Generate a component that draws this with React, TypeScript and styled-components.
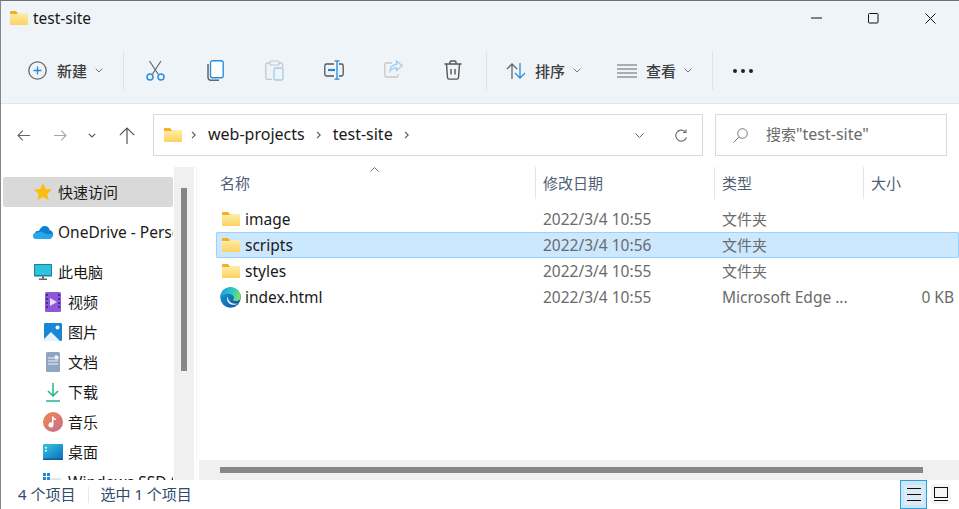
import React from 'react';
import styled, { createGlobalStyle } from 'styled-components';

const GlobalStyle = createGlobalStyle`
  html, body {
    margin: 0;
    padding: 0;
    width: 959px;
    height: 509px;
    overflow: hidden;
    background: #fff;
  }
`;

const FONT = `"Noto Sans", "Noto Sans CJK SC", sans-serif`;

const Window = styled.div`
  width: 959px;
  height: 509px;
  box-sizing: border-box;
  border-top: 1px solid #6f6f6f;
  border-left: 1px solid #7f8790;
  display: flex;
  flex-direction: column;
  font-family: ${FONT};
  font-size: 15px;
  color: #1a1a1a;
  background: #fff;
  overflow: hidden;
`;

const TitleBar = styled.div`
  height: 36px;
  flex: none;
  box-sizing: border-box;
  padding: 0 0 2px 9px;
  display: flex;
  align-items: center;
  background: #eff4f9;
`;

const TitleText = styled.span`
  margin-left: 5px;
  font-size: 15.5px;
`;

const WindowButtons = styled.div`
  margin-left: auto;
  display: flex;
  align-items: center;
`;

const WindowButton = styled.div`
  width: 57px;
  display: flex;
  justify-content: center;
  svg {
    display: block;
  }
`;

const Toolbar = styled.div`
  height: 65px;
  padding-top: 1px;
  flex: none;
  display: flex;
  align-items: center;
  background: #eff4f9;
  border-bottom: 1px solid #e3e5e8;
`;

const NewButton = styled.div`
  width: 122px;
  display: flex;
  align-items: center;
  padding-left: 27px;
  box-sizing: border-box;
`;

const Divider = styled.div`
  width: 1px;
  height: 39px;
  background: #dfe3e7;
  flex: none;
`;

const IconButton = styled.div`
  width: 59.5px;
  display: flex;
  justify-content: center;
  svg {
    display: block;
  }
`;

const ToolButtons = styled.div`
  display: flex;
  padding-left: 2px;
  width: 362px;
  box-sizing: border-box;
`;

const ToolLabel = styled.span<{ $gap: number }>`
  font-size: 15px;
  color: #3d3d3d;
  font-weight: 500;
  margin-left: ${(p) => p.$gap}px;
`;

const Chevron = styled.svg`
  margin-left: 8px;
  display: block;
`;

const SortGroup = styled.div`
  width: 111px;
  display: flex;
  align-items: center;
  padding-left: 19px;
`;

const ViewGroup = styled.div`
  width: 95px;
  display: flex;
  align-items: center;
`;

const Dots = styled.div`
  margin-left: 20px;
  display: flex;
  gap: 4px;
  span {
    width: 4px;
    height: 4px;
    border-radius: 50%;
    background: #222;
  }
`;

const AddressRow = styled.div`
  height: 63px;
  flex: none;
  box-sizing: border-box;
  padding-bottom: 1px;
  display: flex;
  align-items: center;
`;

const NavButtons = styled.div`
  width: 152px;
  display: flex;
  align-items: center;
  padding-left: 16px;
  box-sizing: border-box;
`;

const NavSlot = styled.span<{ $gap?: number }>`
  display: block;
  margin-left: ${(p) => p.$gap ?? 0}px;
  svg {
    display: block;
  }
`;

const AddressBox = styled.div`
  width: 550px;
  height: 42px;
  box-sizing: border-box;
  border: 1px solid #d9d9d9;
  display: flex;
  align-items: center;
  padding: 0 14px 0 10px;
  flex: none;
`;

const FolderArrowGap = styled.span`
  width: 9px;
`;

const Crumb = styled.span`
  font-size: 16px;
  margin: -2px 11px 0 12px;
`;

const AddressActions = styled.div`
  margin-left: auto;
  display: flex;
  align-items: center;
  gap: 31px;
  svg {
    display: block;
  }
`;

const SearchBox = styled.div`
  width: 232px;
  height: 42px;
  box-sizing: border-box;
  border: 1px solid #d9d9d9;
  margin-left: 12px;
  display: flex;
  align-items: center;
  padding-left: 17px;
  color: #6b6b6b;
  flex: none;
`;

const SearchText = styled.span`
  margin: -2px 0 0 18px;
`;

const LatinPart = styled.span`
  font-size: 16px;
`;

const Main = styled.div`
  flex: 1;
  min-height: 0;
  display: flex;
  overflow: hidden;
`;

const Sidebar = styled.div`
  width: 173px;
  flex: none;
  overflow: hidden;
  padding: 10px 0 0 2px;
  box-sizing: border-box;
`;

const NavItem = styled.div<{ $depth?: number; $active?: boolean; $spaced?: boolean }>`
  height: 30px;
  width: 170px;
  flex: none;
  display: flex;
  align-items: center;
  box-sizing: border-box;
  white-space: nowrap;
  overflow: hidden;
  border-radius: 2px;
  padding-left: ${(p) => (p.$depth ? 40 : 30)}px;
  background: ${(p) => (p.$active ? '#d9d9d9' : 'transparent')};
  margin-bottom: ${(p) => (p.$spaced ? 10 : 0)}px;
`;

const NavLabel = styled.span<{ $latin?: boolean }>`
  margin-top: ${(p) => (p.$latin ? 0 : -2)}px;
  font-size: ${(p) => (p.$latin ? 15.5 : 15)}px;
`;

const NavIcon = styled.span<{ $inset?: number }>`
  width: 25px;
  flex: none;
  display: flex;
  align-items: center;
  padding-left: ${(p) => p.$inset ?? 0}px;
  box-sizing: border-box;
  svg {
    display: block;
  }
`;

const VScroll = styled.div`
  width: 20px;
  flex: none;
  background: #f0f0f0;
  padding: 21px 7px 0;
  box-sizing: border-box;
`;

const VThumb = styled.div`
  width: 6px;
  height: 183px;
  background: #878787;
`;

const Content = styled.div`
  flex: 1;
  min-width: 0;
  display: flex;
  flex-direction: column;
  margin-left: 2px;
  padding-left: 2px;
  border-left: 1px solid #f5f5f5;
`;

const ListArea = styled.div`
  flex: 1;
  min-height: 0;
`;

const HeaderRow = styled.div`
  height: 32px;
  display: grid;
  grid-template-columns: 337px 179px 149px 1fr;
  position: relative;
  color: #4f5f73;
  margin-bottom: 7px;
`;

const HeaderCell = styled.div<{ $first?: boolean }>`
  display: flex;
  align-items: center;
  padding-left: ${(p) => (p.$first ? 21 : 7)}px;
  padding-bottom: 2px;
  border-right: 1px solid #e5e5e5;
  &:last-child {
    border-right: 0;
  }
`;

const SortCaret = styled.svg`
  position: absolute;
  left: 171px;
  top: 0;
`;

const FileRow = styled.div<{ $selected?: boolean }>`
  height: 26px;
  margin-left: 17px;
  box-sizing: border-box;
  display: grid;
  grid-template-columns: 319px 179px 148px 1fr;
  align-items: center;
  border: 1px solid ${(p) => (p.$selected ? '#99d1ff' : 'transparent')};
  background: ${(p) => (p.$selected ? '#cce8ff' : 'transparent')};
  border-radius: 1px;
  font-size: 15.5px;
  color: #6b6b6b;
`;

const NameCell = styled.div`
  display: flex;
  align-items: center;
  padding-left: 5px;
  color: #1a1a1a;
  svg {
    display: block;
    margin-right: 5px;
  }
`;

const Cell = styled.div<{ $cjk?: boolean }>`
  padding-left: 7px;
  white-space: nowrap;
  font-size: ${(p) => (p.$cjk ? 15 : 15.5)}px;
  margin-top: ${(p) => (p.$cjk ? -2 : 0)}px;
`;

const SizeCell = styled.div`
  text-align: right;
  padding-right: 4px;
`;

const EdgeSvg = styled.svg`
  margin: 0 4px 0 -2px !important;
`;

const HScroll = styled.div`
  height: 20px;
  flex: none;
  background: #f0f0f0;
  padding: 7px 0 0 21px;
  box-sizing: border-box;
`;

const HThumb = styled.div`
  width: 703px;
  height: 6px;
  background: #878787;
`;

const StatusBar = styled.div`
  height: 29px;
  flex: none;
  display: flex;
  align-items: center;
  padding-left: 17px;
  color: #2f4a6b;
  background: #fff;
  position: relative;
`;

const StatusText = styled.span`
  margin-top: -3px;
`;

const StatusDivider = styled.div`
  width: 1px;
  height: 16px;
  background: #e8e8e8;
  margin: 0 11px 0 13px;
`;

const ViewToggles = styled.div`
  margin-left: auto;
  display: flex;
  align-items: flex-start;
  margin-right: 8px;
  gap: 4px;
  height: 29px;
`;

const DetailsToggle = styled.div`
  width: 27px;
  height: 29px;
  box-sizing: border-box;
  border: 1px solid #2ba0e0;
  background: #cde6f7;
  display: flex;
  align-items: center;
  justify-content: center;
`;

const DetailsInner = styled.div`
  width: 20px;
  height: 20px;
  background: #dcecf7;
  border-radius: 2px;
  display: flex;
  align-items: center;
  justify-content: center;
`;

const TilesToggle = styled.div`
  width: 20px;
  height: 20px;
  margin-top: 4px;
  background: #f5f5f5;
  border-radius: 2px;
  display: flex;
  align-items: center;
  justify-content: center;
`;

const FolderIcon = ({ id }: { id: string }) => (
  <svg width="18" height="14" viewBox="0 0 18 14">
    <defs>
      <linearGradient id={id} x1="0" y1="0" x2="0" y2="1">
        <stop offset="0" stopColor="#ffedaf" />
        <stop offset="1" stopColor="#fbd35c" />
      </linearGradient>
    </defs>
    <path d="M0 1.200C0 .5.5 0 1.200 0h4.600l2 2H18v2H0z" fill="#f6b01b" />
    <path d="M0 3h7l1.400-1H17c.6 0 1 .4 1 1v10c0 .6-.4 1-1 1H1c-.6 0-1-.4-1-1z" fill={`url(#${id})`} />
  </svg>
);

const SmallChevron = () => (
  <Chevron width="8" height="5" viewBox="0 0 8 5" fill="none" stroke="#777" strokeWidth="1">
    <path d="M.7.7 4 4 7.300.7" />
  </Chevron>
);

const CrumbArrow = () => (
  <svg width="5" height="8" viewBox="0 0 5 8" fill="none" stroke="#555" strokeWidth="1.100">
    <path d="M1 .8 4.200 4 1 7.200" />
  </svg>
);

const EdgeIcon = () => (
  <EdgeSvg width="21" height="21" viewBox="0 0 21 21">
    <defs>
      <linearGradient id="edgeBase" x1="0" y1="0" x2="1" y2="1">
        <stop offset="0" stopColor="#1b9de2" />
        <stop offset="1" stopColor="#0a4f97" />
      </linearGradient>
      <linearGradient id="edgeTop" x1="0" y1="0" x2="1" y2="0.4">
        <stop offset="0" stopColor="#1496dc" />
        <stop offset="0.6" stopColor="#30c8c0" />
        <stop offset="1" stopColor="#74dc70" />
      </linearGradient>
    </defs>
    <circle cx="10.500" cy="10.500" r="10.300" fill="url(#edgeBase)" />
    <path d="M.4 9.500C1 4 5 .2 10.500.2c5.800 0 10.300 4.500 10.300 9.800 0 2.800-2.200 4-4.400 4-1.500 0-2.800-.4-3.600-1.100 1.400-1.100 1.500-2.700.5-4C12 7.300 10 6.400 7.800 6.700 4.500 7 1.800 8.500.4 9.500z" fill="url(#edgeTop)" />
    <path d="M7.800 9.500c-1.800 3.400.2 7.800 5 8.300 2 .2 3.800-.3 5-1.300-3 .8-6.300.3-8.200-1.900C8.500 13.300 7.900 11.400 7.800 9.500z" fill="#f4fbff" />
  </EdgeSvg>
);

const App: React.FC = () => (
  <Window>
    <GlobalStyle />
    <TitleBar>
      <FolderIcon id="titleFolder" />
      <TitleText>test-site</TitleText>
      <WindowButtons>
        <WindowButton>
          <svg width="11" height="2" viewBox="0 0 11 2"><path d="M0 1h11" stroke="#111" strokeWidth="1" /></svg>
        </WindowButton>
        <WindowButton>
          <svg width="11" height="11" viewBox="0 0 11 11"><rect x=".5" y=".5" width="9.500" height="9.500" rx="1" fill="none" stroke="#111" /></svg>
        </WindowButton>
        <WindowButton>
          <svg width="11" height="11" viewBox="0 0 11 11"><path d="M.5.5l10 10M10.500.5l-10 10" stroke="#111" fill="none" /></svg>
        </WindowButton>
      </WindowButtons>
    </TitleBar>

    <Toolbar>
      <NewButton>
        <svg width="19" height="19" viewBox="0 0 19 19" fill="none">
          <circle cx="9.500" cy="9.500" r="8.700" stroke="#666" strokeWidth="1.300" />
          <path d="M9.500 5.500v8M5.500 9.500h8" stroke="#1f8ae0" strokeWidth="1.300" />
        </svg>
        <ToolLabel $gap={10}>新建</ToolLabel>
        <SmallChevron />
      </NewButton>
      <Divider />
      <ToolButtons>
        <IconButton>
          <svg width="19" height="21" viewBox="0 0 19 21" fill="none">
            <path d="M3.500 1 12 14M15 1 6.500 14" stroke="#666" strokeWidth="1.200" />
            <circle cx="4" cy="17" r="3" stroke="#2b8fdf" strokeWidth="1.500" />
            <circle cx="15" cy="17" r="3" stroke="#2b8fdf" strokeWidth="1.500" />
          </svg>
        </IconButton>
        <IconButton>
          <svg width="17" height="21" viewBox="0 0 17 21" fill="none">
            <path d="M1 4v13c0 2 1.500 3.300 3 3.300h8" stroke="#666" strokeWidth="1.500" />
            <rect x="3.500" y=".8" width="12.700" height="17" rx="2" stroke="#2b8fdf" strokeWidth="1.400" fill="#fff" />
          </svg>
        </IconButton>
        <IconButton>
          <svg width="19" height="21" viewBox="0 0 19 21" fill="none" opacity=".4">
            <path d="M5 3H2.500C1.500 3 .8 3.700.8 4.700v13c0 1 .7 1.700 1.700 1.700H7M14 3h2c1 0 1.700.7 1.700 1.700V7" stroke="#888" strokeWidth="1.300" />
            <rect x="5" y="1" width="9" height="4" rx="1" stroke="#888" strokeWidth="1.200" />
            <rect x="9" y="8" width="9" height="12" rx="1.500" stroke="#2b8fdf" strokeWidth="1.300" />
          </svg>
        </IconButton>
        <IconButton>
          <svg width="20" height="20" viewBox="0 0 20 20" fill="none">
            <path d="M10 4H2.500C1.500 4 .8 4.700.8 5.700v8.600c0 1 .7 1.700 1.700 1.700H10M15 4h2.500c1 0 1.700.7 1.700 1.700v8.600c0 1-.7 1.700-1.700 1.700H15" stroke="#555" strokeWidth="1.300" />
            <path d="M4 10h7" stroke="#1f8ae0" strokeWidth="2.200" />
            <path d="M10.500.8h5M13 .8v18.400M10.500 19.200h5" stroke="#1f8ae0" strokeWidth="1.300" />
          </svg>
        </IconButton>
        <IconButton>
          <svg width="19" height="18" viewBox="0 0 19 18" fill="none" opacity=".4">
            <path d="M8 3H2.500C1.500 3 .8 3.700.8 4.700v10.600c0 1 .7 1.700 1.700 1.700h10c1 0 1.700-.7 1.700-1.700V14" stroke="#888" strokeWidth="1.300" />
            <path d="M12.500 1l5.700 4.700-5.700 4.700V7.800c-3 0-5 1-6.500 3.500 0-4 2.500-6.500 6.500-7z" stroke="#2b8fdf" strokeWidth="1.200" />
          </svg>
        </IconButton>
        <IconButton>
          <svg width="18" height="20" viewBox="0 0 18 20" fill="none" stroke="#555" strokeWidth="1.400">
            <path d="M.5 4h17M6 4V2.300C6 1.500 6.500 1 7.300 1h3.400c.8 0 1.300.5 1.300 1.300V4M2.500 4l1 13.500c.1 1 .8 1.600 1.700 1.600h7.600c.9 0 1.600-.6 1.700-1.600l1-13.500M7 9v5.500M11 9v5.500" />
          </svg>
        </IconButton>
      </ToolButtons>
      <Divider />
      <SortGroup>
        <svg width="20" height="16" viewBox="0 0 20 16" fill="none" strokeWidth="1.300">
          <path d="M6 16V1M1 6 6 1l5 5" stroke="#666" />
          <path d="M14 0v15M9 10l5 5 5-5" stroke="#2b8fdf" />
        </svg>
        <ToolLabel $gap={9}>排序</ToolLabel>
        <SmallChevron />
      </SortGroup>
      <ViewGroup>
        <svg width="20" height="14" viewBox="0 0 20 14" fill="none" stroke="#666" strokeWidth="1.200">
          <path d="M0 1h20M0 5h20M0 9h20M0 13h20" />
        </svg>
        <ToolLabel $gap={9}>查看</ToolLabel>
        <SmallChevron />
      </ViewGroup>
      <Divider />
      <Dots><span /><span /><span /></Dots>
    </Toolbar>

    <AddressRow>
      <NavButtons>
        <NavSlot>
          <svg width="13" height="11" viewBox="0 0 13 11" fill="none" stroke="#666" strokeWidth="1.100">
            <path d="M13 5.500H1M5.800.7 1 5.500l4.800 4.800" />
          </svg>
        </NavSlot>
        <NavSlot $gap={24}>
          <svg width="13" height="11" viewBox="0 0 13 11" fill="none" stroke="#a8a8a8" strokeWidth="1.100">
            <path d="M0 5.500h12M7.200.7 12 5.500l-4.800 4.800" />
          </svg>
        </NavSlot>
        <NavSlot $gap={21}>
          <svg width="8" height="5" viewBox="0 0 8 5" fill="none" stroke="#555" strokeWidth="1.100">
            <path d="M.8.8 4 4 7.200.8" />
          </svg>
        </NavSlot>
        <NavSlot $gap={23}>
          <svg width="16" height="17" viewBox="0 0 16 17" fill="none" stroke="#555" strokeWidth="1.200">
            <path d="M8 17V1M.8 8.200 8 1l7.200 7.200" />
          </svg>
        </NavSlot>
      </NavButtons>
      <AddressBox>
        <FolderIcon id="addressFolder" />
        <FolderArrowGap />
        <CrumbArrow />
        <Crumb>web-projects</Crumb>
        <CrumbArrow />
        <Crumb>test-site</Crumb>
        <CrumbArrow />
        <AddressActions>
          <svg width="9" height="5" viewBox="0 0 9 5" fill="none" stroke="#666" strokeWidth="1">
            <path d="M.5.5l4 4 4-4" />
          </svg>
          <svg width="13" height="13" viewBox="0 0 13 13" fill="none" stroke="#666" strokeWidth="1.100">
            <path d="M11.500 8.500A5.500 5.500 0 1 1 10 2.500M11 .5v3H8" />
          </svg>
        </AddressActions>
      </AddressBox>
      <SearchBox>
        <svg width="15" height="15" viewBox="0 0 15 15" fill="none" stroke="#777" strokeWidth="1">
          <circle cx="9.500" cy="5.500" r="4.800" />
          <path d="M6 9 .6 14.400" />
        </svg>
        <SearchText>搜索<LatinPart>"test-site"</LatinPart></SearchText>
      </SearchBox>
    </AddressRow>

    <Main>
      <Sidebar>
        <NavItem $active $spaced>
          <NavIcon $inset={1}>
            <svg width="18" height="18" viewBox="0 0 18 18">
              <path d="M9 0l2.700 5.900 6.300.7-4.700 4.300 1.300 6.400L9 14.100l-5.600 3.200 1.300-6.400L0 6.600l6.300-.7z" fill="#fdbd0f" />
            </svg>
          </NavIcon>
          <NavLabel>快速访问</NavLabel>
        </NavItem>
        <NavItem $spaced>
          <NavIcon>
            <svg width="20" height="13" viewBox="0 0 20 13">
              <path d="M3 13a3 3 0 0 1-1-5.800C2.500 5 5 4.500 6 5c1-3 3-5 6-5 2.500 0 4 1.500 4.500 4 2 .3 3.500 2 3.500 4.300 0 2.700-2 4.700-4 4.700z" fill="#0f7fd6" />
              <path d="M3 13a3 3 0 0 1-1.500-5.500L8 5.500l5 2.500 7 .5c0 2.500-2 4.500-4 4.500z" fill="#28a8ea" />
            </svg>
          </NavIcon>
          <NavLabel $latin>OneDrive - Personal</NavLabel>
        </NavItem>
        <NavItem>
          <NavIcon $inset={1}>
            <svg width="18" height="16" viewBox="0 0 18 16">
              <rect x="0" y="0" width="18" height="12.500" rx=".5" fill="#1b7f9e" />
              <rect x="1" y="1" width="16" height="10" fill="#2cc3dc" />
              <rect x="8" y="12.500" width="2" height="2" fill="#555" />
              <rect x="5" y="14.500" width="8" height="1.500" fill="#666" />
            </svg>
          </NavIcon>
          <NavLabel>此电脑</NavLabel>
        </NavItem>
        <NavItem $depth={1}>
          <NavIcon $inset={2}>
            <svg width="16" height="20" viewBox="0 0 16 20">
              <rect width="16" height="20" rx="1.500" fill="#8c57d8" />
              <path d="M5 6l7 4-7 4z" fill="#e8dcfa" />
              <path d="M1 2h2v2H1zM1 6h2v2H1zM1 10h2v2H1zM1 14h2v2H1zM13 2h2v2h-2zM13 6h2v2h-2zM13 10h2v2h-2zM13 14h2v2h-2z" fill="#4a2b85" />
            </svg>
          </NavIcon>
          <NavLabel>视频</NavLabel>
        </NavItem>
        <NavItem $depth={1}>
          <NavIcon $inset={1}>
            <svg width="18" height="18" viewBox="0 0 18 18">
              <rect width="18" height="18" rx="1" fill="#1a86d8" />
              <circle cx="13.500" cy="4.500" r="2" fill="#fff" />
              <path d="M0 18v-2l7-7 9 9z" fill="#e6f3fb" />
            </svg>
          </NavIcon>
          <NavLabel>图片</NavLabel>
        </NavItem>
        <NavItem $depth={1}>
          <NavIcon $inset={3}>
            <svg width="14" height="20" viewBox="0 0 14 20">
              <rect width="14" height="20" rx="1.500" fill="#8fa6c2" />
              <path d="M2 6h6M2 9h10M2 12h10M9 4h3v3H9z" stroke="#eef3f8" strokeWidth="1" fill="#eef3f8" />
            </svg>
          </NavIcon>
          <NavLabel>文档</NavLabel>
        </NavItem>
        <NavItem $depth={1}>
          <NavIcon $inset={3}>
            <svg width="14" height="19" viewBox="0 0 14 19" fill="none" stroke="#1fb88f" strokeWidth="1.500">
              <path d="M7 0v13M2 8l5 5 5-5M0 18h14" />
            </svg>
          </NavIcon>
          <NavLabel>下载</NavLabel>
        </NavItem>
        <NavItem $depth={1}>
          <NavIcon>
            <svg width="20" height="20" viewBox="0 0 20 20">
              <defs>
                <linearGradient id="musicFill" x1="0" y1="0" x2="1" y2="1">
                  <stop offset="0" stopColor="#f08a4b" />
                  <stop offset="1" stopColor="#c86a96" />
                </linearGradient>
              </defs>
              <circle cx="10" cy="10" r="10" fill="url(#musicFill)" />
              <path d="M9 4.500h1.500c.2 1.500 1.200 2 2.500 2.200V8c-1 0-2-.3-2.500-.8v5.800a2.500 2.500 0 1 1-1.500-2.300z" fill="#fff" />
            </svg>
          </NavIcon>
          <NavLabel>音乐</NavLabel>
        </NavItem>
        <NavItem $depth={1}>
          <NavIcon>
            <svg width="20" height="16" viewBox="0 0 20 16">
              <defs>
                <linearGradient id="deskFill" x1="0" y1="0" x2="1" y2="1">
                  <stop offset="0" stopColor="#35c8e0" />
                  <stop offset="1" stopColor="#0f6cc0" />
                </linearGradient>
              </defs>
              <rect width="20" height="15" rx="1" fill="url(#deskFill)" />
              <rect x="2" y="3" width="2" height="1.500" fill="#e8f8fc" />
              <rect x="2" y="6" width="2" height="1.500" fill="#e8f8fc" />
              <rect y="14.500" width="20" height="1.500" fill="#0a5a9c" />
            </svg>
          </NavIcon>
          <NavLabel>桌面</NavLabel>
        </NavItem>
        <NavItem $depth={1}>
          <NavIcon>
            <svg width="20" height="18" viewBox="0 0 20 18">
              <path d="M0 0h3v3H0zM4 0h3v3H4zM0 4h3v3H0zM4 4h3v3H4z" fill="#1a86d8" />
              <path d="M9 5h8l3 4H4z" fill="#dfe2e7" />
            </svg>
          </NavIcon>
          <NavLabel $latin>Windows SSD (C:)</NavLabel>
        </NavItem>
      </Sidebar>
      <VScroll>
        <VThumb />
      </VScroll>
      <Content>
        <ListArea>
          <HeaderRow>
            <SortCaret width="9" height="5" viewBox="0 0 9 5" fill="none" stroke="#777" strokeWidth="1">
              <path d="M.5 4.500l4-4 4 4" />
            </SortCaret>
            <HeaderCell $first>名称</HeaderCell>
            <HeaderCell>修改日期</HeaderCell>
            <HeaderCell>类型</HeaderCell>
            <HeaderCell>大小</HeaderCell>
          </HeaderRow>
          <FileRow>
            <NameCell><FolderIcon id="f1" />image</NameCell>
            <Cell>2022/3/4 10:55</Cell>
            <Cell $cjk>文件夹</Cell>
          </FileRow>
          <FileRow $selected>
            <NameCell><FolderIcon id="f2" />scripts</NameCell>
            <Cell>2022/3/4 10:56</Cell>
            <Cell $cjk>文件夹</Cell>
          </FileRow>
          <FileRow>
            <NameCell><FolderIcon id="f3" />styles</NameCell>
            <Cell>2022/3/4 10:55</Cell>
            <Cell $cjk>文件夹</Cell>
          </FileRow>
          <FileRow>
            <NameCell><EdgeIcon />index.html</NameCell>
            <Cell>2022/3/4 10:55</Cell>
            <Cell>Microsoft Edge ...</Cell>
            <SizeCell>0 KB</SizeCell>
          </FileRow>
        </ListArea>
        <HScroll>
          <HThumb />
        </HScroll>
      </Content>
    </Main>

    <StatusBar>
      <StatusText>4 个项目</StatusText>
      <StatusDivider />
      <StatusText>选中 1 个项目</StatusText>
      <ViewToggles>
        <DetailsToggle>
          <DetailsInner>
            <svg width="14" height="13" viewBox="0 0 14 13" stroke="#111" strokeWidth="1"><path d="M0 .5h14M0 6.500h14M0 12.500h14" /></svg>
          </DetailsInner>
        </DetailsToggle>
        <TilesToggle>
          <svg width="14" height="14" viewBox="0 0 14 14" fill="none" stroke="#111" strokeWidth="1"><rect x=".5" y=".5" width="13" height="10" /><path d="M0 13.500h14" /></svg>
        </TilesToggle>
      </ViewToggles>
    </StatusBar>
  </Window>
);

export default App;
